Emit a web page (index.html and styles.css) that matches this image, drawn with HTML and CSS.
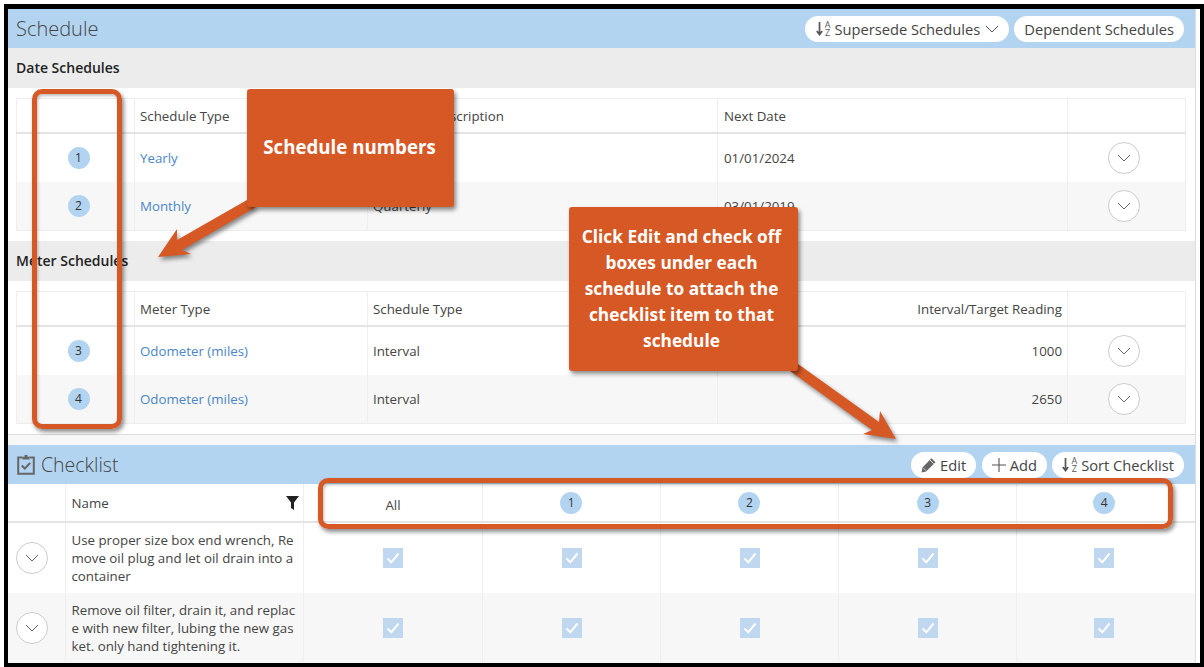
FILE: index.html
```html
<!DOCTYPE html>
<html lang="en">
<head>
<meta charset="UTF-8">
<meta name="viewport" content="width=device-width, initial-scale=1.0">
<title>Schedule</title>
<link rel="stylesheet" href="styles.css">
</head>
<body>

<div class="frame">
<div class="content">
    <div class="bar">
        <h2>Schedule</h2>
        <div class="bar-buttons">
            <button class="pill pill-first">
                <span class="az-icon"><svg width="7" height="15" viewBox="0 0 7 15"><path d="M3.5 1v12M.8 10l2.7 3.5L6.2 10" fill="none" stroke="#555" stroke-width="1.7"/></svg><span class="az"><span>A</span><span>Z</span></span></span>
                Supersede Schedules
                <svg class="pill-chevron" width="14" height="8" viewBox="0 0 14 8"><path d="M1 1l6 6 6-6" fill="none" stroke="#555" stroke-width="1"/></svg>
            </button>
            <button class="pill">Dependent Schedules</button>
        </div>
    </div>

    <div class="sub-bar">Date Schedules</div>
    <div class="table-wrap">
        <table class="sched">
            <colgroup><col class="c-num"><col class="c-type"><col class="c-mid"><col class="c-mid"><col class="c-act"></colgroup>
            <thead>
                <tr><th></th><th>Schedule Type</th><th>Schedule Description</th><th>Next Date</th><th></th></tr>
            </thead>
            <tbody>
                <tr>
                    <td class="num-cell"><span class="badge">1</span></td>
                    <td><a href="#">Yearly</a></td>
                    <td>Yearly</td>
                    <td>01/01/2024</td>
                    <td class="act-cell"><span class="circle-btn"><svg width="14" height="8" viewBox="0 0 14 8"><path d="M1 1l6 6 6-6" fill="none" stroke="#666" stroke-width="1"/></svg></span></td>
                </tr>
                <tr>
                    <td class="num-cell"><span class="badge">2</span></td>
                    <td><a href="#">Monthly</a></td>
                    <td>Quarterly</td>
                    <td>03/01/2019</td>
                    <td class="act-cell"><span class="circle-btn"><svg width="14" height="8" viewBox="0 0 14 8"><path d="M1 1l6 6 6-6" fill="none" stroke="#666" stroke-width="1"/></svg></span></td>
                </tr>
            </tbody>
        </table>
    </div>

    <div class="sub-bar">Meter Schedules</div>
    <div class="table-wrap last">
        <table class="sched">
            <colgroup><col class="c-num"><col class="c-type"><col class="c-mid"><col class="c-mid"><col class="c-act"></colgroup>
            <thead>
                <tr><th></th><th>Meter Type</th><th>Schedule Type</th><th class="right">Interval/Target Reading</th><th></th></tr>
            </thead>
            <tbody>
                <tr>
                    <td class="num-cell"><span class="badge">3</span></td>
                    <td><a href="#">Odometer (miles)</a></td>
                    <td>Interval</td>
                    <td class="right">1000</td>
                    <td class="act-cell"><span class="circle-btn"><svg width="14" height="8" viewBox="0 0 14 8"><path d="M1 1l6 6 6-6" fill="none" stroke="#666" stroke-width="1"/></svg></span></td>
                </tr>
                <tr>
                    <td class="num-cell"><span class="badge">4</span></td>
                    <td><a href="#">Odometer (miles)</a></td>
                    <td>Interval</td>
                    <td class="right">2650</td>
                    <td class="act-cell"><span class="circle-btn"><svg width="14" height="8" viewBox="0 0 14 8"><path d="M1 1l6 6 6-6" fill="none" stroke="#666" stroke-width="1"/></svg></span></td>
                </tr>
            </tbody>
        </table>
    </div>

    <div class="bar">
        <h2 class="checklist-title">
            <svg width="18" height="21" viewBox="0 0 18 21"><path d="M5.5 3.5H1.2v16.3h15.6V3.5h-4.3" fill="none" stroke="#666" stroke-width="2"/><path d="M5.5 5.5V2.8h2V1h3v1.8h2v2.7z" fill="#666"/><path d="M4.8 11.5l3 3 5.4-5.6" fill="none" stroke="#666" stroke-width="2"/></svg>
            Checklist
        </h2>
        <div class="bar-buttons wide">
            <button class="pill">
                <svg width="15" height="16" viewBox="0 0 15 16"><path d="M0.5 15.5l1-5L10.5 1.2l4 4-9.3 9.2z" fill="#666"/><path d="M9 3l3.8 3.8" stroke="#fff" stroke-width=".8"/><path d="M2.2 10.8l3 3" stroke="#fff" stroke-width=".6"/></svg>
                Edit
            </button>
            <button class="pill">
                <svg width="14" height="14" viewBox="0 0 14 14"><path d="M7 0v14M0 7h14" stroke="#555" stroke-width="1.1"/></svg>
                Add
            </button>
            <button class="pill">
                <span class="az-icon"><svg width="7" height="15" viewBox="0 0 7 15"><path d="M3.5 1v12M.8 10l2.7 3.5L6.2 10" fill="none" stroke="#555" stroke-width="1.7"/></svg><span class="az"><span>A</span><span>Z</span></span></span>
                Sort Checklist
            </button>
        </div>
    </div>

    <table class="checks">
        <colgroup><col class="k-act"><col class="k-name"><col class="k-first"><col class="k-box"><col class="k-box"><col class="k-box"><col class="k-box"></colgroup>
        <thead>
            <tr>
                <th></th>
                <th class="name-th"><div class="name-head">Name <svg width="13" height="14" viewBox="0 0 13 14"><path d="M0 0h13L8 6.5V14l-3-2V6.5z" fill="#222"/></svg></div></th>
                <th class="center all-head">All</th>
                <th class="center"><span class="badge">1</span></th>
                <th class="center"><span class="badge">2</span></th>
                <th class="center"><span class="badge">3</span></th>
                <th class="center"><span class="badge">4</span></th>
            </tr>
        </thead>
        <tbody>
            <tr>
                <td class="act-cell"><span class="circle-btn"><svg width="14" height="8" viewBox="0 0 14 8"><path d="M1 1l6 6 6-6" fill="none" stroke="#666" stroke-width="1"/></svg></span></td>
                <td class="name-cell">Use proper size box end wrench, Remove oil plug and let oil drain into a container</td>
                <td class="box-cell"><span class="check"><svg width="14" height="12" viewBox="0 0 14 12"><path d="M1.5 6.5l3.8 3.8L12.5 1.5" fill="none" stroke="#fff" stroke-width="2"/></svg></span></td>
                <td class="box-cell"><span class="check"><svg width="14" height="12" viewBox="0 0 14 12"><path d="M1.5 6.5l3.8 3.8L12.5 1.5" fill="none" stroke="#fff" stroke-width="2"/></svg></span></td>
                <td class="box-cell"><span class="check"><svg width="14" height="12" viewBox="0 0 14 12"><path d="M1.5 6.5l3.8 3.8L12.5 1.5" fill="none" stroke="#fff" stroke-width="2"/></svg></span></td>
                <td class="box-cell"><span class="check"><svg width="14" height="12" viewBox="0 0 14 12"><path d="M1.5 6.5l3.8 3.8L12.5 1.5" fill="none" stroke="#fff" stroke-width="2"/></svg></span></td>
                <td class="box-cell"><span class="check"><svg width="14" height="12" viewBox="0 0 14 12"><path d="M1.5 6.5l3.8 3.8L12.5 1.5" fill="none" stroke="#fff" stroke-width="2"/></svg></span></td>
            </tr>
            <tr>
                <td class="act-cell"><span class="circle-btn"><svg width="14" height="8" viewBox="0 0 14 8"><path d="M1 1l6 6 6-6" fill="none" stroke="#666" stroke-width="1"/></svg></span></td>
                <td class="name-cell">Remove oil filter, drain it, and replace with new filter, lubing the new gasket. only hand tightening it.</td>
                <td class="box-cell"><span class="check"><svg width="14" height="12" viewBox="0 0 14 12"><path d="M1.5 6.5l3.8 3.8L12.5 1.5" fill="none" stroke="#fff" stroke-width="2"/></svg></span></td>
                <td class="box-cell"><span class="check"><svg width="14" height="12" viewBox="0 0 14 12"><path d="M1.5 6.5l3.8 3.8L12.5 1.5" fill="none" stroke="#fff" stroke-width="2"/></svg></span></td>
                <td class="box-cell"><span class="check"><svg width="14" height="12" viewBox="0 0 14 12"><path d="M1.5 6.5l3.8 3.8L12.5 1.5" fill="none" stroke="#fff" stroke-width="2"/></svg></span></td>
                <td class="box-cell"><span class="check"><svg width="14" height="12" viewBox="0 0 14 12"><path d="M1.5 6.5l3.8 3.8L12.5 1.5" fill="none" stroke="#fff" stroke-width="2"/></svg></span></td>
                <td class="box-cell"><span class="check"><svg width="14" height="12" viewBox="0 0 14 12"><path d="M1.5 6.5l3.8 3.8L12.5 1.5" fill="none" stroke="#fff" stroke-width="2"/></svg></span></td>
            </tr>
        </tbody>
    </table>
</div>
</div>

<!-- annotations drawn on top of the screenshot -->
<div class="mark mark-numbers"></div>
<div class="mark mark-header"></div>
<svg class="arrows" width="1204" height="667" viewBox="0 0 1204 667">
    <polygon points="247,200 256,207 182,250 191,254 158,257 177,229 177,240" fill="#d65825"/>
    <polygon points="790,371 798,364 879,422 880,411 896,439 863,434 872,430" fill="#d65825"/>
</svg>
<div class="callout callout-numbers">Schedule numbers</div>
<div class="callout callout-edit">Click Edit and check off boxes under each schedule to attach the checklist item to that schedule</div>

</body>
</html>
```

FILE: styles.css
```css
body {
    margin: 0;
    background-color: #fff;
    font-family: "Open Sans", Arial, sans-serif;
    font-size: 13.3px;
    color: #444;
}
.frame {
    box-sizing: border-box;
    width: 1200px;
    height: 663px;
    margin: 4px 0 0 4px;
    border: solid #000;
    border-width: 5px 4px 4px 4px;
    overflow: hidden;
    background-color: #fff;
}
.content {
    box-sizing: content-box;
    width: 1187px;
    height: 100%;
    border-right: 1px solid #ddd;
    background-color: #f7f7f7;
}
.bar {
    display: flex;
    justify-content: space-between;
    align-items: center;
    height: 39px;
    padding: 0 11px 0 8px;
    background-color: #b3d4f0;
}
.bar h2 {
    display: flex;
    align-items: center;
    gap: 6px;
    margin: 0;
    font-size: 20px;
    font-weight: 300;
    color: #444;
}
.bar h2.checklist-title {
    font-size: 19.5px;
    padding: 0 0 1px 1px;
}
.bar-buttons {
    display: flex;
    gap: 5px;
}
.bar-buttons.wide {
    gap: 5.5px;
}
.pill {
    display: flex;
    align-items: center;
    gap: 4px;
    height: 26px;
    padding: 0 10px;
    border: none;
    border-radius: 13px;
    background-color: #fff;
    font-family: inherit;
    font-size: 14.7px;
    color: #444;
}
.pill-first {
    padding-left: 11px;
}
.az-icon {
    display: flex;
    align-items: center;
    gap: 2px;
}
.az {
    display: flex;
    flex-direction: column;
    font-size: 9px;
    line-height: 8px;
    color: #555;
}
.pill-chevron {
    margin-left: 1px;
}
.sub-bar {
    height: 40px;
    padding-left: 8px;
    background-color: #ececec;
    font-size: 14px;
    font-weight: 600;
    line-height: 39px;
    color: #222;
}
.table-wrap {
    padding: 10px 10px 10px 8px;
    background-color: #fff;
}
.table-wrap.last {
    border-bottom: 1px solid #ddd;
    margin-bottom: 10px;
}
table {
    border-collapse: collapse;
    table-layout: fixed;
    background-color: #fff;
}
.sched {
    width: 1169px;
    border: 1px solid #eee;
}
.c-num { width: 118px; }
.c-type { width: 233px; }
.c-mid { width: 350px; }
.c-act { width: 118px; }
th {
    font-weight: 400;
    text-align: left;
    padding: 0 5px;
    border-left: 1px solid #eee;
    border-bottom: 2px solid #e4e4e4;
}
.sched th { height: 33px; }
td {
    padding: 0 5px;
    border-left: 1px solid #eee;
}
.sched td { height: 48px; }
.sched th:nth-child(4),
.sched td:nth-child(4) { padding-left: 6px; }
tbody tr:nth-child(even) td {
    background-color: #f7f7f7;
}
.center { text-align: center; }
.right { text-align: right; }
.num-cell {
    padding-left: 11px;
    text-align: center;
}
.act-cell {
    padding-right: 10px;
    text-align: center;
}
a {
    color: #4a86c8;
    text-decoration: none;
}
.badge {
    display: inline-block;
    width: 22px;
    height: 22px;
    border-radius: 50%;
    background-color: #b3d4f0;
    font-size: 12px;
    line-height: 22px;
    text-align: center;
    vertical-align: middle;
    color: #333;
}
.circle-btn {
    display: inline-flex;
    align-items: center;
    justify-content: center;
    box-sizing: border-box;
    width: 32px;
    height: 32px;
    border: 1px solid #ccc;
    border-radius: 50%;
    background-color: #fff;
    vertical-align: middle;
}
.checks {
    width: 1187px;
}
.k-act { width: 57px; }
.k-name { width: 238px; }
.k-first { width: 179px; }
.k-box { width: 178.25px; }
.checks th { height: 33px; padding-top: 1px; }
.checks th:first-child,
.checks td:first-child { border-left: none; }
.checks th:last-child { padding-right: 9px; }
.checks .act-cell { padding-right: 14px; }
.name-th { padding-right: 4px; }
.name-head {
    display: flex;
    justify-content: space-between;
    align-items: center;
    padding-left: 1px;
}
.checks th.all-head { padding: 4px 4px 0 5px; }
.checks td {
    height: 70px;
}
.name-cell {
    padding-left: 6px;
    line-height: 18px;
    word-break: break-all;
}
.box-cell {
    padding-left: 6px;
    text-align: center;
}
.box-cell:last-child {
    padding: 0 9px 0 5px;
}
.check {
    display: inline-flex;
    align-items: center;
    justify-content: center;
    width: 20px;
    height: 20px;
    background-color: #bfd7ef;
    vertical-align: middle;
}
.mark {
    position: absolute;
    box-sizing: border-box;
    border: 5px solid #d65825;
    border-radius: 10px;
    box-shadow: 2px 3px 4px rgba(0, 0, 0, 0.45), inset 1px 2px 3px rgba(0, 0, 0, 0.25);
}
.mark-numbers {
    left: 32px;
    top: 89px;
    width: 90px;
    height: 340px;
}
.mark-header {
    left: 318px;
    top: 478px;
    width: 855px;
    height: 51px;
}
.arrows {
    position: absolute;
    left: 0;
    top: 0;
    filter: drop-shadow(2px 3px 2px rgba(0, 0, 0, 0.45));
}
.callout {
    position: absolute;
    box-sizing: border-box;
    border-radius: 3px;
    background-color: #d65825;
    box-shadow: 2px 3px 4px rgba(0, 0, 0, 0.45);
    color: #fff;
    font-weight: 700;
    text-align: center;
}
.callout-numbers {
    left: 247px;
    top: 89px;
    width: 207px;
    height: 118px;
    padding: 45px 2px 0 0;
    font-size: 18.7px;
    line-height: 26px;
}
.callout-edit {
    left: 569px;
    top: 207px;
    width: 229px;
    height: 164px;
    padding: 17px 10px 0 6px;
    font-size: 17.3px;
    line-height: 26px;
}
```
